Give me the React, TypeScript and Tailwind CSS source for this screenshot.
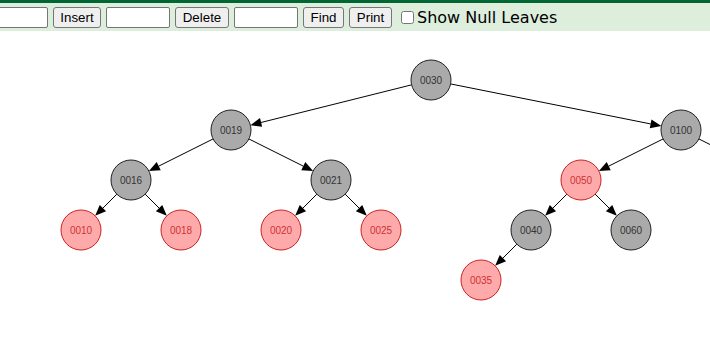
import React from 'react'

type Node = { key: string; x: number; y: number; red?: boolean }

const nodes: Node[] = [
  { key: '0030', x: 431, y: 49 },
  { key: '0019', x: 231, y: 99 },
  { key: '0100', x: 681, y: 99 },
  { key: '0016', x: 131, y: 149 },
  { key: '0021', x: 331, y: 149 },
  { key: '0050', x: 581, y: 149, red: true },
  { key: '0010', x: 81, y: 199, red: true },
  { key: '0018', x: 181, y: 199, red: true },
  { key: '0020', x: 281, y: 199, red: true },
  { key: '0025', x: 381, y: 199, red: true },
  { key: '0040', x: 531, y: 199 },
  { key: '0060', x: 631, y: 199 },
  { key: '0035', x: 481, y: 249, red: true },
]

const offRight = { x: 781, y: 149 }

const edges: [string, string][] = [
  ['0030', '0019'],
  ['0030', '0100'],
  ['0019', '0016'],
  ['0019', '0021'],
  ['0016', '0010'],
  ['0016', '0018'],
  ['0021', '0020'],
  ['0021', '0025'],
  ['0100', '0050'],
  ['0050', '0040'],
  ['0050', '0060'],
  ['0040', '0035'],
]

const R = 20

function Edge({ a, b }: { a: { x: number; y: number }; b: { x: number; y: number } }) {
  const dx = b.x - a.x
  const dy = b.y - a.y
  const len = Math.sqrt(dx * dx + dy * dy)
  const ux = dx / len
  const uy = dy / len
  const sx = a.x + ux * R
  const sy = a.y + uy * R
  const tx = b.x - ux * R
  const ty = b.y - uy * R
  const bx = tx - ux * 11
  const by = ty - uy * 11
  const px = -uy * 4.5
  const py = ux * 4.5
  return (
    <g>
      <line x1={sx} y1={sy} x2={bx} y2={by} stroke="#000" strokeWidth={1} />
      <polygon points={`${tx},${ty} ${bx + px},${by + py} ${bx - px},${by - py}`} fill="#000" />
    </g>
  )
}

function Tree() {
  const pos = (k: string) => nodes.find((n) => n.key === k)!
  const root = pos('0100')
  return (
    <svg width={710} height={317} className="block">
      {edges.map(([p, c]) => (
        <Edge key={p + c} a={pos(p)} b={pos(c)} />
      ))}
      <Edge a={root} b={offRight} />
      {nodes.map((n) => (
        <g key={n.key}>
          <circle
            cx={n.x}
            cy={n.y}
            r={R}
            fill={n.red ? '#ffaaaa' : '#aaaaaa'}
            stroke={n.red ? '#cc2222' : '#222'}
            strokeWidth={1}
          />
          <text
            x={n.x}
            y={n.y + 4}
            textAnchor="middle"
            fontSize={10}
            fontFamily="'Liberation Sans', Arial, sans-serif"
            fill={n.red ? '#cc3333' : '#333'}
          >
            {n.key}
          </text>
        </g>
      ))}
    </svg>
  )
}

const inputCls =
  'h-[21px] bg-white border border-[#767676] rounded-[2px] px-1 text-[13px] outline-none'
const btnCls =
  'h-[21px] px-[6px] bg-[#efefef] border border-[#767676] rounded-[3px] text-[13.33px] text-black leading-none'

export default function App() {
  return (
    <div className="w-[710px] h-[348px] overflow-hidden bg-white font-['Liberation_Sans',Arial,sans-serif]">
      <div className="h-[3px] bg-[#006633]" />
      <div className="h-[28px] bg-[#ddeedd] flex items-center gap-[5px] -ml-[16px] pt-[1px]">
        <input className={`${inputCls} w-[64px]`} />
        <button className={`${btnCls} w-[48px]`}>Insert</button>
        <input className={`${inputCls} w-[64px]`} />
        <button className={`${btnCls} w-[54px]`}>Delete</button>
        <input className={`${inputCls} w-[64px]`} />
        <button className={`${btnCls} w-[41px]`}>Find</button>
        <button className={`${btnCls} w-[43px]`}>Print</button>
        <label className="flex items-center ml-[4px] text-[16px] font-['DejaVu_Sans',Verdana,sans-serif] text-black">
          <input type="checkbox" className="w-[13px] h-[13px] m-0 mr-[3px]" />
          Show Null Leaves
        </label>
      </div>
      <Tree />
    </div>
  )
}
